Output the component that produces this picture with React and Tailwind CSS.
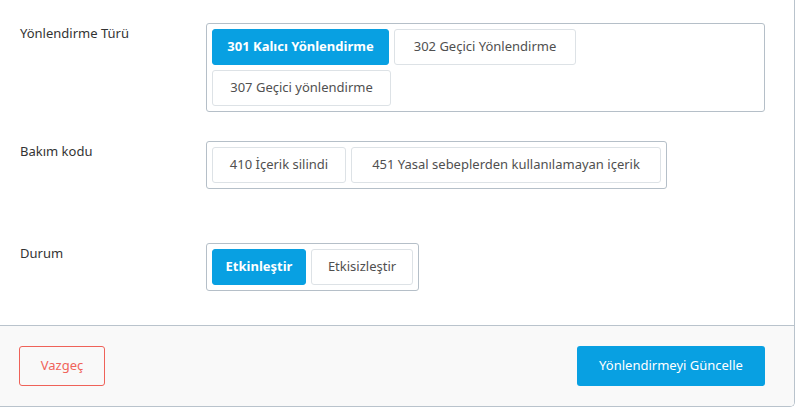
import React, { useState } from "react";

const font = { fontFamily: '"Noto Sans", "Open Sans", Arial, sans-serif' };

function Choice({ active, width, children, onClick }) {
    return (
        <button
            onClick={onClick}
            className={`h-[36px] rounded-[3px] text-[13px] whitespace-nowrap ${width} ${
                active
                    ? "bg-[#08a0e2] border border-[#08a0e2] text-white font-bold"
                    : "bg-white border border-[#dde2e6] text-[#505050]"
            }`}
        >
            {children}
        </button>
    );
}

function Field({ label, className, children }) {
    return (
        <div className={`flex items-start ${className}`}>
            <div className="w-[206px] pl-5 pt-[1px] text-[13px] leading-[18px] text-[#333]">{label}</div>
            {children}
        </div>
    );
}

export default function App() {
    const [redirect, setRedirect] = useState("301");
    const [code, setCode] = useState(null);
    const [status, setStatus] = useState("on");

    return (
        <div className="w-[798px] h-[407px] bg-white overflow-hidden" style={font}>
            <div className="w-[795px] border-r border-b border-[#b9c3cc] rounded-br-[5px] overflow-hidden">
                <div className="h-[325px] pt-[23px]">
                    <Field label="Yönlendirme Türü">
                        <div className="w-[559px] border border-[#b5bfc8] rounded-[3px] p-[5px] flex flex-wrap gap-[5px]">
                            <Choice width="w-[177px]" active={redirect === "301"} onClick={() => setRedirect("301")}>301 Kalıcı Yönlendirme</Choice>
                            <Choice width="w-[182px]" active={redirect === "302"} onClick={() => setRedirect("302")}>302 Geçici Yönlendirme</Choice>
                            <Choice width="w-[179px]" active={redirect === "307"} onClick={() => setRedirect("307")}>307 Geçici yönlendirme</Choice>
                        </div>
                    </Field>

                    <Field label="Bakım kodu" className="mt-[29px]">
                        <div className="border border-[#b5bfc8] rounded-[3px] p-[5px] flex gap-[5px]">
                            <Choice width="w-[134px]" active={code === "410"} onClick={() => setCode("410")}>410 İçerik silindi</Choice>
                            <Choice width="w-[310px]" active={code === "451"} onClick={() => setCode("451")}>451 Yasal sebeplerden kullanılamayan içerik</Choice>
                        </div>
                    </Field>

                    <Field label="Durum" className="mt-[54px]">
                        <div className="border border-[#b5bfc8] rounded-[3px] p-[5px] flex gap-[5px]">
                            <Choice width="w-[94px]" active={status === "on"} onClick={() => setStatus("on")}>Etkinleştir</Choice>
                            <Choice width="w-[102px]" active={status === "off"} onClick={() => setStatus("off")}>Etkisizleştir</Choice>
                        </div>
                    </Field>
                </div>

                <div className="h-[81px] border-t border-[#b9c3cc] bg-[#f9f9f9] flex items-center justify-between pl-[19px] pr-[29px]">
                    <button className="w-[86px] h-[40px] border border-[#ef6259] rounded-[3px] text-[13px] text-[#f0645b]">
                        Vazgeç
                    </button>
                    <button className="w-[188px] h-[40px] bg-[#08a0e2] rounded-[3px] text-[13px] text-white">
                        Yönlendirmeyi Güncelle
                    </button>
                </div>
            </div>
        </div>
    );
}
